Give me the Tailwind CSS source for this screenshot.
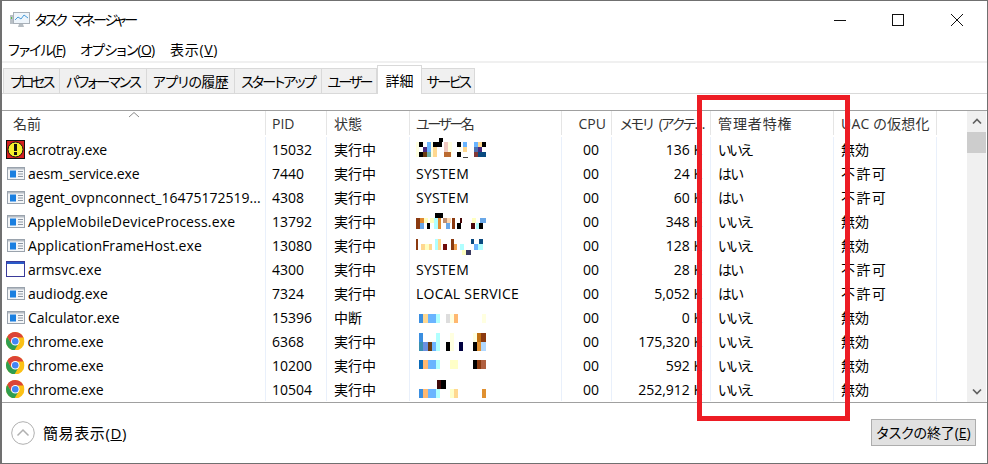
<!DOCTYPE html>
<html lang="ja">
<head>
<meta charset="utf-8">
<title>タスク マネージャー</title>
<script src="https://cdn.jsdelivr.net/npm/@tailwindcss/browser@4"></script>
</head>
<body class="bg-white">
<svg width="0" height="0" class="absolute">
  <symbol id="app" viewBox="0 0 18 13">
    <rect x="0.5" y="0.5" width="17" height="12" fill="#f4f6f8" stroke="#9aa3ad"/>
    <rect x="1" y="1" width="16" height="1.5" fill="#b5bcc4"/>
    <rect x="3" y="3.5" width="6" height="7" fill="#1a7fe0"/>
    <rect x="11" y="4" width="5" height="1" fill="#8d97a3"/>
    <rect x="11" y="6.5" width="5" height="1" fill="#8d97a3"/>
    <rect x="11" y="9" width="5" height="1" fill="#8d97a3"/>
  </symbol>
  <symbol id="chrome" viewBox="0 0 48 48">
    <circle cx="24" cy="24" r="24" fill="#fbc116"/>
    <path d="M24 0A24 24 0 0 0 3.2 12L13.6 30 24 14H45A24 24 0 0 0 24 0Z" fill="#dc4437"/>
    <path d="M3.2 12A24 24 0 0 0 22 47.9L32.4 30 13.6 30Z" fill="#2f9e4f"/>
    <circle cx="24" cy="24" r="11" fill="#fff"/>
    <circle cx="24" cy="24" r="8.5" fill="#4285f4"/>
  </symbol>
</svg>

<div class="relative flex h-[464px] w-[988px] flex-col overflow-hidden border-t border-r border-b border-l-2 border-[#707070] bg-white font-['Open_Sans','Noto_Sans_CJK_JP',sans-serif] text-[14px] text-black [font-feature-settings:'palt']">

  <!-- title bar -->
  <div class="flex h-[37px] items-center">
    <svg class="ml-2 mr-[5px]" width="20" height="18" viewBox="0 0 20 18">
      <rect x="3.5" y="1.5" width="16" height="11" fill="#eef5fb" stroke="#a8b0b8"/>
      <path d="M5 9l3-3 3 2 3-4 4 3" fill="none" stroke="#4a9bd8"/>
      <rect x="0" y="4" width="3" height="9" fill="#b9c0c6"/>
      <rect x="1" y="6" width="1" height="2" fill="#58c04a"/>
      <path d="M9 13h4l1 3H8z" fill="#b5bcc2"/>
    </svg>
    <span class="whitespace-pre tracking-[-2.3px] [word-spacing:5px]">タスク マネージャー</span>
    <div class="ml-auto flex items-center">
      <svg width="14" height="14" viewBox="0 0 14 14" class="mr-[44px]"><path d="M1 7.5h12" stroke="#111"/></svg>
      <svg width="14" height="14" viewBox="0 0 14 14" class="mr-[45px]"><rect x="1.5" y="1.5" width="11" height="11" fill="none" stroke="#111"/></svg>
      <svg width="14" height="14" viewBox="0 0 14 14" class="mr-[23px]"><path d="M1 1l12 12M13 1L1 13" stroke="#111"/></svg>
    </div>
  </div>

  <!-- menu -->
  <div class="flex h-[23px] items-center pl-[6px]">
    <span class="mr-[14px] w-[58px] whitespace-nowrap tracking-[-1px]">ファイル(<u>F</u>)</span>
    <span class="mr-[16px] w-[74px] whitespace-nowrap tracking-[-0.8px]">オプション(<u>O</u>)</span>
    <span class="whitespace-nowrap tracking-[0.7px]">表示(<u>V</u>)</span>
  </div>
  <div class="h-[2px] bg-[#f0f0f0]"></div>

  <!-- tabs -->
  <div class="flex h-[31px] items-end border-b border-[#d9d9d9] pl-[1px]">
    <div class="flex h-[25px] w-[57px] items-center justify-center border border-b-0 border-[#d9d9d9] bg-[#f0f0f0] tracking-[-2.5px]">プロセス</div>
    <div class="flex h-[25px] w-[87px] items-center justify-center border border-b-0 border-l-0 border-[#d9d9d9] bg-[#f0f0f0] tracking-[-1.9px]">パフォーマンス</div>
    <div class="flex h-[25px] w-[88px] items-center justify-center border border-b-0 border-l-0 border-[#d9d9d9] bg-[#f0f0f0] tracking-[-0.6px]">アプリの履歴</div>
    <div class="flex h-[25px] w-[87px] items-center justify-center border border-b-0 border-l-0 border-[#d9d9d9] bg-[#f0f0f0] tracking-[-1.8px]">スタートアップ</div>
    <div class="flex h-[25px] w-[55px] items-center justify-center border border-b-0 border-l-0 border-[#d9d9d9] bg-[#f0f0f0] tracking-[-2.8px]">ユーザー</div>
    <div class="relative -mb-px flex h-[29px] w-[45px] items-center justify-center border border-b-0 border-[#d9d9d9] bg-white">詳細</div>
    <div class="flex h-[25px] w-[53px] items-center justify-center border border-b-0 border-l-0 border-[#d9d9d9] bg-[#f0f0f0] tracking-[-2.4px]">サービス</div>
  </div>
  <div class="h-[16px]"></div>

  <!-- process table -->
  <div class="flex h-[293px] border-t border-b border-[#a0a0a0]">
    <div class="flex-1 overflow-hidden">
      <div class="grid h-[26px] grid-cols-[264px_61px_83px_152px_50px_99px_123px_103px] items-stretch pb-[2px] text-[#333]">
        <div class="relative flex items-center border-r border-[#e5e5e5] pl-[11px]">名前
          <svg class="absolute left-[126px] top-0" width="12" height="7" viewBox="0 0 12 7"><path d="M1 6l5-4.5L11 6" fill="none" stroke="#8a8a8a"/></svg>
        </div>
        <div class="flex items-center border-r border-[#e5e5e5] pl-[6px]">PID</div>
        <div class="flex items-center border-r border-[#e5e5e5] pl-[7px]">状態</div>
        <div class="flex items-center border-r border-[#e5e5e5] pl-[6px] tracking-[-2.4px]">ユーザー名</div>
        <div class="flex items-center justify-end border-r border-[#e5e5e5] pr-[5px]">CPU</div>
        <div class="flex items-center overflow-hidden whitespace-pre border-r border-[#e5e5e5] pl-[8px] tracking-[-1.5px] [word-spacing:4px]">メモリ (アクテ…</div>
        <div class="flex items-center border-r border-[#e5e5e5] pl-[7px] tracking-[0.9px]">管理者特権</div>
        <div class="flex items-center border-r border-[#e5e5e5] pl-[7px] tracking-[0.2px]">UAC の仮想化</div>
      </div>

      <div class="grid grid-cols-[264px_61px_83px_152px_50px_99px_123px_103px] auto-rows-[24px] [&>div]:flex [&>div]:items-center [&>div]:overflow-hidden [&>div]:whitespace-nowrap [&>div]:border-r [&>div]:border-[#e9f0fb]">
        <!-- acrotray -->
        <div class="pl-[4px]">
          <svg class="mr-[3px] shrink-0" width="19" height="19" viewBox="0 0 19 19">
            <rect width="19" height="19" fill="#111"/><rect x="1" y="1" width="17" height="17" fill="#d42020"/>
            <circle cx="9.500" cy="9.500" r="7.500" fill="#f6f02c" stroke="#111"/><rect x="8" y="4" width="3" height="7" fill="#111"/><rect x="8" y="12" width="3" height="3" fill="#111"/>
          </svg><span class="tracking-[-0.15px]">acrotray.exe</span></div>
        <div class="pl-[6px]">15032</div><div class="pl-[7px]">実行中</div>
        <div class="pl-[6px]"><svg width="72" height="24" shape-rendering="crispEdges"><path fill="#ffffe0" d="M0 5h3v15H0zM15 5h2v15h-2zM32 5h4v15h-4zM43 10h2v10h-2z"/><path fill="#000" d="M3 5h4v5H3zM3 15h4v5H3zM17 5h9v5h-9zM23 1h4v4h-4zM41 5h4v5h-4zM41 15h4v5h-4zM66 5h4v5h-4z"/><path fill="#6ab4ff" d="M11 5h4v10h-4zM58 5h4v5h-4zM47 5h4v5h-4z"/><path fill="#4a2a80" d="M7 10h4v5H7zM62 10h4v5h-4z"/><path fill="#6b3a10" d="M7 15h4v5H7z"/><path fill="#6fb0a8" d="M11 15h4v5h-4z"/><path fill="#ffd890" d="M17 10h4v10h-4zM47 10h4v5h-4zM62 5h4v5h-4z"/><path fill="#f0c8c0" d="M28 5h4v10h-4z"/><path fill="#bb6a30" d="M28 15h7v5h-7z"/><path fill="#4a70b0" d="M58 10h4v5h-4z"/><path fill="#0a4a80" d="M62 15h4v5h-4zM66 15h4v5h-4z"/><path fill="#803838" d="M58 15h4v5h-4z"/><path fill="#444" d="M47 20h5v1h-5z"/></svg></div>
        <div class="justify-end pr-[12px]">00</div><div class="justify-end pr-[8px]">136 K</div><div class="pl-[7px] tracking-[-2px]">いいえ</div><div class="pl-[7px]">無効</div>

        <div class="pl-[5px]"><svg class="mr-[3px] shrink-0" width="18" height="13"><use href="#app"/></svg><span class="tracking-[-0.12px]">aesm_service.exe</span></div>
        <div class="pl-[6px]">7440</div><div class="pl-[7px]">実行中</div><div class="pl-[6px] tracking-[0.3px]">SYSTEM</div>
        <div class="justify-end pr-[12px]">00</div><div class="justify-end pr-[8px]">24 K</div><div class="pl-[7px] tracking-[-1.5px]">はい</div><div class="pl-[7px] tracking-[1.4px]">不許可</div>

        <div class="pl-[5px]"><svg class="mr-[3px] shrink-0" width="18" height="13"><use href="#app"/></svg>agent_ovpnconnect_16475172519...</div>
        <div class="pl-[6px]">4308</div><div class="pl-[7px]">実行中</div><div class="pl-[6px] tracking-[0.3px]">SYSTEM</div>
        <div class="justify-end pr-[12px]">00</div><div class="justify-end pr-[8px]">60 K</div><div class="pl-[7px] tracking-[-1.5px]">はい</div><div class="pl-[7px] tracking-[1.4px]">不許可</div>

        <div class="pl-[5px]"><svg class="mr-[3px] shrink-0" width="18" height="13"><use href="#app"/></svg><span class="tracking-[0.18px]">AppleMobileDeviceProcess.exe</span></div>
        <div class="pl-[6px]">13792</div><div class="pl-[7px]">実行中</div>
        <div class="pl-[6px]"><svg width="72" height="24" shape-rendering="crispEdges"><path fill="#8b3a10" d="M0 9h4v11H0zM36 9h3v11h-3z"/><path fill="#e08a30" d="M4 9h4v5H4zM22 9h3v11h-3z"/><path fill="#6aa8e8" d="M4 14h4v6H4zM30 14h4v6h-4zM64 9h6v5h-6z"/><path fill="#ffffc0" d="M8 9h4v5H8zM14 9h4v5h-4zM56 9h4v5h-4z"/><path fill="#000" d="M11 14h3v6h-3zM19 4h8v5h-8zM41 14h4v6h-4zM63 14h4v6h-4z"/><path fill="#b0ffff" d="M18 9h4v11h-4zM60 14h3v6h-3z"/><path fill="#c09070" d="M27 9h4v5h-4z"/><path fill="#ffd8b0" d="M31 9h4v5h-4z"/><path fill="#4a0a0a" d="M44 9h2v5h-2zM55 14h4v6h-4z"/></svg></div>
        <div class="justify-end pr-[12px]">00</div><div class="justify-end pr-[8px]">348 K</div><div class="pl-[7px] tracking-[-2px]">いいえ</div><div class="pl-[7px]">無効</div>

        <div class="pl-[5px]"><svg class="mr-[3px] shrink-0" width="18" height="13"><use href="#app"/></svg><span class="tracking-[0.09px]">ApplicationFrameHost.exe</span></div>
        <div class="pl-[6px]">13080</div><div class="pl-[7px]">実行中</div>
        <div class="pl-[6px]"><svg width="72" height="24" shape-rendering="crispEdges"><path fill="#8b3a10" d="M0 6h2v11H0zM35 6h3v11h-3z"/><path fill="#ffd890" d="M5 11h4v6H5zM13 11h3v6h-3zM22 6h3v11h-3z"/><path fill="#ffffc0" d="M9 11h4v6H9zM46 17h4v5h-4z"/><path fill="#b0ffff" d="M19 6h3v11h-3zM44 11h4v6h-4zM62 11h5v6h-5z"/><path fill="#700a0a" d="M27 11h4v6h-4z"/><path fill="#f0a050" d="M38 11h3v6h-3z"/><path fill="#0a4a80" d="M55 6h3v5h-3zM63 6h4v5h-4z"/><path fill="#6ab4ff" d="M58 11h4v6h-4z"/><path fill="#3a3a60" d="M50 17h5v5h-5z"/></svg></div>
        <div class="justify-end pr-[12px]">00</div><div class="justify-end pr-[8px]">128 K</div><div class="pl-[7px] tracking-[-2px]">いいえ</div><div class="pl-[7px]">無効</div>

        <div class="pl-[4px]">
          <svg class="mr-[3px] shrink-0" width="19" height="16" viewBox="0 0 19 16"><rect x="0.5" y="0.5" width="18" height="15" fill="#fff" stroke="#3a3a9a"/><rect x="1" y="1" width="17" height="2" fill="#2a5ac8"/></svg>armsvc.exe</div>
        <div class="pl-[6px]">4300</div><div class="pl-[7px]">実行中</div><div class="pl-[6px] tracking-[0.3px]">SYSTEM</div>
        <div class="justify-end pr-[12px]">00</div><div class="justify-end pr-[8px]">28 K</div><div class="pl-[7px] tracking-[-1.5px]">はい</div><div class="pl-[7px] tracking-[1.4px]">不許可</div>

        <div class="pl-[5px]"><svg class="mr-[3px] shrink-0" width="18" height="13"><use href="#app"/></svg>audiodg.exe</div>
        <div class="pl-[6px]">7324</div><div class="pl-[7px]">実行中</div><div class="pl-[6px] tracking-[0.25px]">LOCAL SERVICE</div>
        <div class="justify-end pr-[12px]">00</div><div class="justify-end pr-[8px]">5,052 K</div><div class="pl-[7px] tracking-[-1.5px]">はい</div><div class="pl-[7px] tracking-[1.4px]">不許可</div>

        <div class="pl-[5px]"><svg class="mr-[3px] shrink-0" width="18" height="13"><use href="#app"/></svg><span class="tracking-[-0.08px]">Calculator.exe</span></div>
        <div class="pl-[6px]">15396</div><div class="pl-[7px]">中断</div>
        <div class="pl-[6px]"><svg width="72" height="24" shape-rendering="crispEdges"><path fill="#3a8ee0" d="M3 9h4v9H3z"/><path fill="#ffd890" d="M7 9h5v9H7z"/><path fill="#6ab4ff" d="M12 9h8v9h-8z"/><path fill="#b0ffff" d="M20 9h4v9h-4z"/><path fill="#ddd" d="M30 9h4v9h-4z"/><path fill="#ffffe0" d="M34 9h4v9h-4zM66 9h4v9h-4z"/><path fill="#ffb870" d="M38 9h4v9h-4z"/></svg></div>
        <div class="justify-end pr-[12px]">00</div><div class="justify-end pr-[8px]">0 K</div><div class="pl-[7px] tracking-[-2px]">いいえ</div><div class="pl-[7px]">無効</div>

        <div class="pl-[4px]"><svg class="mr-[3px] shrink-0" width="18.500" height="18.500"><use href="#chrome"/></svg><span class="tracking-[-0.1px]">chrome.exe</span></div>
        <div class="pl-[6px]">6368</div><div class="pl-[7px]">実行中</div>
        <div class="pl-[6px]"><svg width="72" height="24" shape-rendering="crispEdges"><path fill="#3a8ee0" d="M3 4h4v9H3z"/><path fill="#3a90b0" d="M3 13h4v9H3z"/><path fill="#6a90e0" d="M7 13h5v9H7z"/><path fill="#6b3a10" d="M12 13h4v9h-4z"/><path fill="#6ab4ff" d="M16 13h4v9h-4z"/><path fill="#b0ffff" d="M20 4h4v18h-4z"/><path fill="#000" d="M30 13h4v9h-4zM57 13h4v9h-4z"/><path fill="#ffffe0" d="M34 4h4v18h-4zM57 4h4v9h-4z"/><path fill="#000040" d="M43 13h4v9h-4z"/><path fill="#c07010" d="M61 4h4v9h-4z"/><path fill="#8b3a10" d="M65 4h5v9h-5z"/><path fill="#e09030" d="M61 13h4v9h-4z"/><path fill="#b0d8ff" d="M65 13h5v9h-5z"/></svg></div>
        <div class="justify-end pr-[12px]">00</div><div class="justify-end pr-[8px]">175,320 K</div><div class="pl-[7px] tracking-[-2px]">いいえ</div><div class="pl-[7px]">無効</div>

        <div class="pl-[4px]"><svg class="mr-[3px] shrink-0" width="18.500" height="18.500"><use href="#chrome"/></svg><span class="tracking-[-0.1px]">chrome.exe</span></div>
        <div class="pl-[6px]">10200</div><div class="pl-[7px]">実行中</div>
        <div class="pl-[6px]"><svg width="72" height="24" shape-rendering="crispEdges"><path fill="#0a6ab8" d="M3 7h4v9H3z"/><path fill="#ffb870" d="M7 7h5v9H7z"/><path fill="#6ab4ff" d="M12 7h8v9h-8z"/><path fill="#b0ffff" d="M20 7h4v9h-4z"/><path fill="#ffffc8" d="M34 7h8v9h-8z"/><path fill="#000" d="M57 7h4v9h-4z"/><path fill="#8b3a10" d="M61 7h4v9h-4z"/><path fill="#b06040" d="M65 7h5v9h-5z"/></svg></div>
        <div class="justify-end pr-[12px]">00</div><div class="justify-end pr-[8px]">592 K</div><div class="pl-[7px] tracking-[-2px]">いいえ</div><div class="pl-[7px]">無効</div>

        <div class="pl-[4px]"><svg class="mr-[3px] shrink-0" width="18.500" height="18.500"><use href="#chrome"/></svg><span class="tracking-[-0.1px]">chrome.exe</span></div>
        <div class="pl-[6px]">10504</div><div class="pl-[7px]">実行中</div>
        <div class="pl-[6px]"><svg width="72" height="24" shape-rendering="crispEdges"><path fill="#3a8ee0" d="M3 12h4v9H3z"/><path fill="#ffb870" d="M7 12h5v9H7z"/><path fill="#6ab4ff" d="M12 12h8v9h-8z"/><path fill="#b0ffff" d="M20 12h4v9h-4z"/><path fill="#400a0a" d="M21 3h4v9h-4z"/><path fill="#000" d="M25 3h5v9h-5z"/><path fill="#ffffc8" d="M34 12h4v9h-4z"/><path fill="#ffd890" d="M38 12h4v9h-4z"/><path fill="#e09030" d="M66 12h4v9h-4z"/></svg></div>
        <div class="justify-end pr-[12px]">00</div><div class="justify-end pr-[8px]">252,912 K</div><div class="pl-[7px] tracking-[-2px]">いいえ</div><div class="pl-[7px]">無効</div>
      </div>
    </div>

    <!-- scrollbar -->
    <div class="mr-px flex w-[19px] flex-col bg-[#f0f0f0]">
      <div class="flex h-[21px] items-center justify-center">
        <svg width="10" height="7" viewBox="0 0 10 7"><path d="M1 5.500l4-4 4 4" fill="none" stroke="#606060" stroke-width="1.700"/></svg>
      </div>
      <div class="h-[21px] bg-[#cdcdcd]"></div>
      <div class="mt-auto flex h-[21px] items-center justify-center">
        <svg width="10" height="7" viewBox="0 0 10 7"><path d="M1 1.500l4 4 4-4" fill="none" stroke="#606060" stroke-width="1.700"/></svg>
      </div>
    </div>
  </div>

  <!-- footer -->
  <div class="flex flex-1 items-center justify-between pl-[9px] pr-[11px]">
    <div class="flex items-center text-[15px]">
      <svg class="mr-[8px]" width="24" height="24" viewBox="0 0 24 24"><circle cx="12" cy="12" r="11.300" fill="#fff" stroke="#b0b0b0"/><path d="M6.500 14.500L12 9l5.500 5.500" fill="none" stroke="#b0b0b0" stroke-width="1.500"/></svg>
      <span class="tracking-[0.6px]">簡易表示(<u>D</u>)</span>
    </div>
    <button class="mt-[-2px] flex h-[27px] w-[105px] items-center justify-center whitespace-nowrap border border-[#adadad] bg-[#e1e1e1] tracking-[-0.1px]">タスクの終了(<u>E</u>)</button>
  </div>

  <!-- red annotation over the screenshot -->
  <div class="absolute left-[695px] top-[94px] h-[326px] w-[153px] border-[5px] border-[#ed1c24]"></div>
</div>
</body>
</html>
